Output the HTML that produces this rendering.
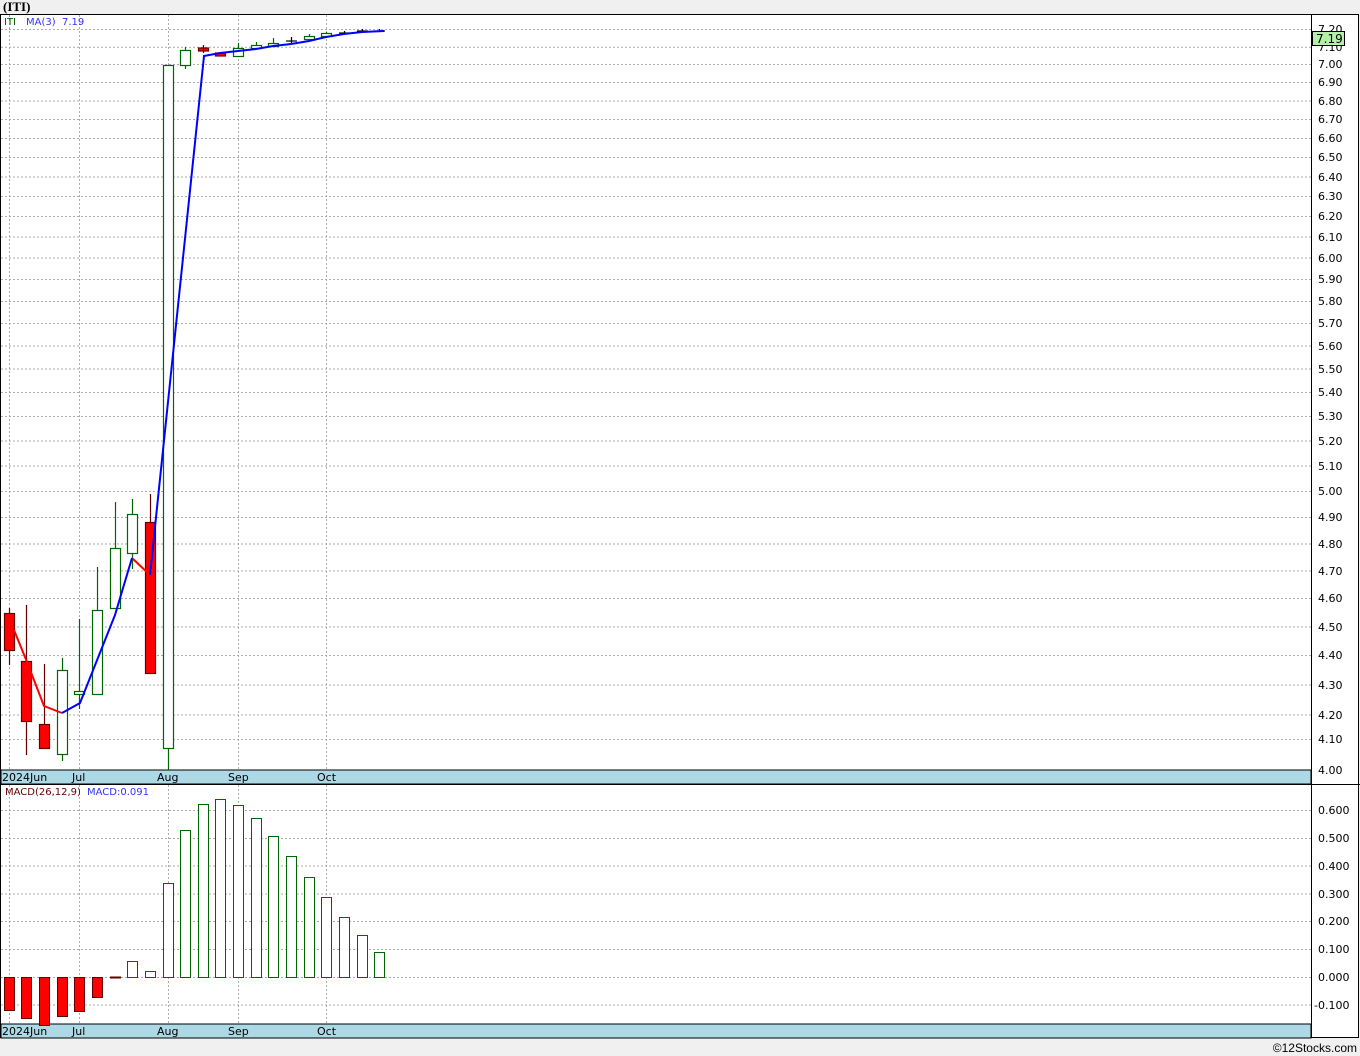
<!DOCTYPE html>
<html><head><meta charset="utf-8"><style>
html,body{margin:0;padding:0;background:#f0f0f0;}
svg{display:block;font-family:"DejaVu Sans","Liberation Sans",sans-serif;}
</style></head><body>
<svg width="1360" height="1056" xmlns="http://www.w3.org/2000/svg">
<rect width="1360" height="1056" fill="#f0f0f0"/>
<text x="3" y="11" font-size="13" font-weight="bold" fill="#000" font-family="Liberation Serif,serif">(ITI)</text>
<rect x="0.5" y="14.5" width="1358" height="1023" fill="#fff" stroke="#000"/>
<line x1="1311.5" y1="14" x2="1311.5" y2="1038" stroke="#000"/>
<rect x="1" y="770" width="1310" height="14" fill="#add8e6" stroke="#000"/>
<rect x="1" y="1024" width="1310" height="14" fill="#add8e6" stroke="#000"/>
<g font-size="11" fill="#000">
<text x="2" y="781">2024Jun</text><text x="72" y="781">Jul</text><text x="157" y="781">Aug</text><text x="228" y="781">Sep</text><text x="317" y="781">Oct</text>
<text x="2" y="1035">2024Jun</text><text x="72" y="1035">Jul</text><text x="157" y="1035">Aug</text><text x="228" y="1035">Sep</text><text x="317" y="1035">Oct</text>
</g>
<g stroke="#aaa" stroke-dasharray="2,2" stroke-width="1">
<line x1="9.5" y1="15" x2="9.5" y2="770"/><line x1="79.5" y1="15" x2="79.5" y2="770"/><line x1="168.5" y1="15" x2="168.5" y2="770"/><line x1="238.5" y1="15" x2="238.5" y2="770"/><line x1="326.5" y1="15" x2="326.5" y2="770"/>
<line x1="9.5" y1="785" x2="9.5" y2="1024"/><line x1="79.5" y1="785" x2="79.5" y2="1024"/><line x1="168.5" y1="785" x2="168.5" y2="1024"/><line x1="238.5" y1="785" x2="238.5" y2="1024"/><line x1="326.5" y1="785" x2="326.5" y2="1024"/>
</g>
<g stroke="#aaa" stroke-dasharray="2,2">
<line x1="1" y1="29.5" x2="1311" y2="29.5"/><line x1="1" y1="47.2" x2="1311" y2="47.2"/><line x1="1" y1="64.5" x2="1311" y2="64.5"/><line x1="1" y1="82.5" x2="1311" y2="82.5"/><line x1="1" y1="101" x2="1311" y2="101"/><line x1="1" y1="119.5" x2="1311" y2="119.5"/><line x1="1" y1="138.5" x2="1311" y2="138.5"/><line x1="1" y1="157.5" x2="1311" y2="157.5"/><line x1="1" y1="177" x2="1311" y2="177"/><line x1="1" y1="196.5" x2="1311" y2="196.5"/><line x1="1" y1="216.5" x2="1311" y2="216.5"/><line x1="1" y1="237" x2="1311" y2="237"/><line x1="1" y1="258" x2="1311" y2="258"/><line x1="1" y1="279.5" x2="1311" y2="279.5"/><line x1="1" y1="301.5" x2="1311" y2="301.5"/><line x1="1" y1="323.5" x2="1311" y2="323.5"/><line x1="1" y1="346" x2="1311" y2="346"/><line x1="1" y1="369" x2="1311" y2="369"/><line x1="1" y1="392.5" x2="1311" y2="392.5"/><line x1="1" y1="416.5" x2="1311" y2="416.5"/><line x1="1" y1="441" x2="1311" y2="441"/><line x1="1" y1="466" x2="1311" y2="466"/><line x1="1" y1="491.5" x2="1311" y2="491.5"/><line x1="1" y1="517.5" x2="1311" y2="517.5"/><line x1="1" y1="544" x2="1311" y2="544"/><line x1="1" y1="571" x2="1311" y2="571"/><line x1="1" y1="598.5" x2="1311" y2="598.5"/><line x1="1" y1="627" x2="1311" y2="627"/><line x1="1" y1="655.5" x2="1311" y2="655.5"/><line x1="1" y1="685" x2="1311" y2="685"/><line x1="1" y1="715" x2="1311" y2="715"/><line x1="1" y1="739.5" x2="1311" y2="739.5"/>
<line x1="1" y1="810.5" x2="1311" y2="810.5"/><line x1="1" y1="838.5" x2="1311" y2="838.5"/><line x1="1" y1="866" x2="1311" y2="866"/><line x1="1" y1="894" x2="1311" y2="894"/><line x1="1" y1="921.5" x2="1311" y2="921.5"/><line x1="1" y1="949.5" x2="1311" y2="949.5"/><line x1="1" y1="977.5" x2="1311" y2="977.5"/><line x1="1" y1="1005" x2="1311" y2="1005"/>
</g>
<g font-size="11" fill="#000">
<text x="1318" y="33">7.20</text><text x="1318" y="51">7.10</text><text x="1318" y="68">7.00</text><text x="1318" y="86">6.90</text><text x="1318" y="105">6.80</text><text x="1318" y="123">6.70</text><text x="1318" y="142">6.60</text><text x="1318" y="161">6.50</text><text x="1318" y="181">6.40</text><text x="1318" y="200">6.30</text><text x="1318" y="220">6.20</text><text x="1318" y="241">6.10</text><text x="1318" y="262">6.00</text><text x="1318" y="283">5.90</text><text x="1318" y="305">5.80</text><text x="1318" y="327">5.70</text><text x="1318" y="350">5.60</text><text x="1318" y="373">5.50</text><text x="1318" y="396">5.40</text><text x="1318" y="420">5.30</text><text x="1318" y="445">5.20</text><text x="1318" y="470">5.10</text><text x="1318" y="495">5.00</text><text x="1318" y="521">4.90</text><text x="1318" y="548">4.80</text><text x="1318" y="575">4.70</text><text x="1318" y="602">4.60</text><text x="1318" y="631">4.50</text><text x="1318" y="659">4.40</text><text x="1318" y="689">4.30</text><text x="1318" y="719">4.20</text><text x="1318" y="743">4.10</text><text x="1318" y="774">4.00</text>
<text x="1318" y="814">0.600</text><text x="1318" y="842">0.500</text><text x="1318" y="870">0.400</text><text x="1318" y="898">0.300</text><text x="1318" y="925">0.200</text><text x="1318" y="953">0.100</text><text x="1318" y="981">0.000</text><text x="1314" y="1009">-0.100</text>
</g>
<rect x="1312.5" y="31.5" width="32" height="14" fill="#b4f0a8" stroke="#000"/>
<text x="1316" y="43" font-size="12" fill="#000">7.19</text>
<text x="4" y="25" font-size="10" fill="#060">ITI</text>
<text x="26" y="25" font-size="10" fill="#33f">MA(3)</text><text x="62" y="25" font-size="10" fill="#33f">7.19</text>
<text x="5" y="795" font-size="10" fill="#600">MACD(26,12,9)</text>
<text x="87" y="795" font-size="10" fill="#33f">MACD:0.091</text>
<g stroke-width="1.2">
<g stroke="#600"><line x1="9.5" y1="608" x2="9.5" y2="665"/><line x1="26.5" y1="605" x2="26.5" y2="755"/><line x1="44.5" y1="664" x2="44.5" y2="748"/><line x1="150.5" y1="494" x2="150.5" y2="673"/></g>
<g fill="#f00" stroke="#600"><rect x="4.5" y="613.5" width="10" height="37"/><rect x="21.5" y="661.5" width="10" height="60"/><rect x="39.5" y="724.5" width="10" height="24"/><rect x="145.5" y="522.5" width="10" height="151"/><rect x="198.5" y="48" width="10" height="3"/><rect x="215.5" y="53" width="10" height="3"/></g>
<g stroke="#600"><line x1="203.5" y1="45" x2="203.5" y2="53"/></g>
<g stroke="#060"><line x1="62.5" y1="658" x2="62.5" y2="761"/><line x1="79.5" y1="619" x2="79.5" y2="709"/><line x1="97.5" y1="567" x2="97.5" y2="694"/><line x1="115.5" y1="502" x2="115.5" y2="608"/><line x1="132.5" y1="499" x2="132.5" y2="569"/><line x1="168.5" y1="65" x2="168.5" y2="770"/><line x1="185.5" y1="47" x2="185.5" y2="69"/><line x1="238.5" y1="43" x2="238.5" y2="57"/><line x1="256.5" y1="42" x2="256.5" y2="49"/><line x1="273.5" y1="38" x2="273.5" y2="47"/><line x1="309.5" y1="34" x2="309.5" y2="39"/><line x1="326.5" y1="32" x2="326.5" y2="38"/></g>
<g fill="#fff" stroke="#060"><rect x="57.5" y="670.5" width="10" height="84"/><rect x="74.5" y="691.5" width="10" height="3"/><rect x="92.5" y="610.5" width="10" height="84"/><rect x="110.5" y="548.5" width="10" height="60"/><rect x="127.5" y="514.5" width="10" height="39"/><rect x="163.5" y="65.5" width="10" height="683"/><rect x="180.5" y="50.5" width="10" height="15"/><rect x="233.5" y="48.5" width="10" height="8"/><rect x="251.5" y="45.5" width="10" height="3"/><rect x="268.5" y="43.5" width="10" height="3"/><rect x="304.5" y="36.5" width="10" height="3"/><rect x="321.5" y="33.5" width="10" height="3"/></g>
<g stroke="#000"><line x1="286" y1="41" x2="297" y2="41"/><line x1="291.5" y1="37" x2="291.5" y2="43"/><line x1="339" y1="33" x2="350" y2="33"/><line x1="344.5" y1="31" x2="344.5" y2="34"/><line x1="357" y1="31" x2="368" y2="31"/><line x1="362.5" y1="29" x2="362.5" y2="32"/><line x1="374" y1="31" x2="385" y2="31"/><line x1="379.5" y1="29" x2="379.5" y2="32"/></g>
</g>
<polyline points="14,630 27,662 44,706 62,713" fill="none" stroke="#f00" stroke-width="2"/>
<polyline points="132,558 150,575" fill="none" stroke="#f00" stroke-width="2"/>
<polyline points="62,713 80,703 115,615 132,558" fill="none" stroke="#00f" stroke-width="2"/>
<polyline points="150,575 204,56 220,53 238,51 256,49 273,46 291,44 309,41 326,37 344,34 362,32 384,31" fill="none" stroke="#00f" stroke-width="2"/>
<g fill="#f00" stroke="#600">
<rect x="4.5" y="977.5" width="10" height="33"/><rect x="21.5" y="977.5" width="10" height="41"/><rect x="39.5" y="977.5" width="10" height="48"/><rect x="57.5" y="977.5" width="10" height="39"/><rect x="74.5" y="977.5" width="10" height="34"/><rect x="92.5" y="977.5" width="10" height="20"/><rect x="110.5" y="977" width="10" height="1"/>
</g>
<g fill="#fff" stroke="#060">
<rect x="127.5" y="961.5" width="10" height="16"/><rect x="145.5" y="971.5" width="10" height="6"/><rect x="163.5" y="883.5" width="10" height="94"/><rect x="180.5" y="830.5" width="10" height="147"/><rect x="198.5" y="804.5" width="10" height="173"/><rect x="215.5" y="799.5" width="10" height="178"/><rect x="233.5" y="805.5" width="10" height="172"/><rect x="251.5" y="818.5" width="10" height="159"/><rect x="268.5" y="836.5" width="10" height="141"/><rect x="286.5" y="856.5" width="10" height="121"/><rect x="304.5" y="877.5" width="10" height="100"/><rect x="321.5" y="897.5" width="10" height="80"/><rect x="339.5" y="917.5" width="10" height="60"/><rect x="357.5" y="935.5" width="10" height="42"/><rect x="374.5" y="952.5" width="10" height="25"/>
</g>
<line x1="0" y1="784.5" x2="1360" y2="784.5" stroke="#000"/>
<text x="1357" y="1052" font-size="12" fill="#000" text-anchor="end" font-family="Liberation Sans,sans-serif">©12Stocks.com</text>
</svg>
</body></html>
